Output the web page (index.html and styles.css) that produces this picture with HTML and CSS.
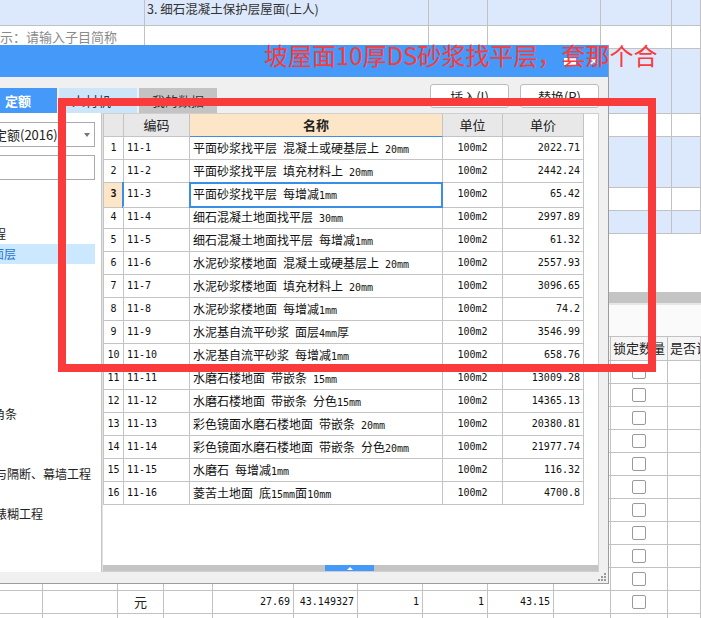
FILE: index.html
```html
<!DOCTYPE html>
<html lang="zh-CN">
<head>
<meta charset="utf-8">
<title>定额查询</title>
<link rel="stylesheet" href="styles.css">
</head>
<body>
<div class="app">
  <div class="trow r1 blue"><div></div><div class="t1">3. 细石混凝土保护层屋面(上人)</div><div></div><div></div><div></div><div></div></div>
  <div class="trow r23"><div class="t2">提示：请输入子目简称</div><div></div><div></div><div></div><div></div><div></div></div>
  <div class="trow r3 blue"><div></div><div></div><div></div><div></div><div></div><div></div></div>
  <div class="trow r23"><div></div><div></div><div></div><div></div><div></div><div></div></div>
  <div class="trow r5 blue"><div></div><div></div><div></div><div></div><div></div><div></div></div>
  <div class="trow r23"><div></div><div></div><div></div><div></div><div></div><div></div></div>
  <div class="trow r23 blue"><div></div><div></div><div></div><div></div><div></div><div></div></div>
  <div class="blank"></div>
  <div class="splitter"></div>
  <div class="lower-tools"></div>
  <div class="brow bhead"><div></div><div></div><div></div><div></div><div></div><div></div><div></div><div></div><div></div><div></div><div class="h">锁定数量</div><div class="h">是否计量</div></div>
  <div class="brow"><div></div><div></div><div></div><div></div><div></div><div></div><div></div><div></div><div></div><div></div><div class="ckc"><span class="ck"></span></div><div></div></div>
  <div class="brow"><div></div><div></div><div></div><div></div><div></div><div></div><div></div><div></div><div></div><div></div><div class="ckc"><span class="ck"></span></div><div></div></div>
  <div class="brow"><div></div><div></div><div></div><div></div><div></div><div></div><div></div><div></div><div></div><div></div><div class="ckc"><span class="ck"></span></div><div></div></div>
  <div class="brow"><div></div><div></div><div></div><div></div><div></div><div></div><div></div><div></div><div></div><div></div><div class="ckc"><span class="ck"></span></div><div></div></div>
  <div class="brow"><div></div><div></div><div></div><div></div><div></div><div></div><div></div><div></div><div></div><div></div><div class="ckc"><span class="ck"></span></div><div></div></div>
  <div class="brow"><div></div><div></div><div></div><div></div><div></div><div></div><div></div><div></div><div></div><div></div><div class="ckc"><span class="ck"></span></div><div></div></div>
  <div class="brow"><div></div><div></div><div></div><div></div><div></div><div></div><div></div><div></div><div></div><div></div><div class="ckc"><span class="ck"></span></div><div></div></div>
  <div class="brow"><div></div><div></div><div></div><div></div><div></div><div></div><div></div><div></div><div></div><div></div><div class="ckc"><span class="ck"></span></div><div></div></div>
  <div class="brow"><div></div><div></div><div></div><div></div><div></div><div></div><div></div><div></div><div></div><div></div><div class="ckc"><span class="ck"></span></div><div></div></div>
  <div class="brow"><div></div><div></div><div></div><div></div><div></div><div></div><div></div><div></div><div></div><div></div><div class="ckc"><span class="ck"></span></div><div></div></div>
  <div class="brow"><div></div><div></div><div class="yuan">元</div><div></div><div class="num">27.69</div><div class="num">43.149327</div><div class="num">1</div><div class="num">1</div><div class="num">43.15</div><div></div><div class="ckc"><span class="ck"></span></div><div></div></div>
  <div class="brow"><div></div><div></div><div></div><div></div><div></div><div></div><div></div><div></div><div></div><div></div><div class="ckc"><span class="ck"></span></div><div></div></div>
</div>

<div class="dlg">
  <div class="dlg-title">
    <span class="tb-max"></span>
    <svg class="tb-close" width="8" height="8" viewBox="0 0 8 8"><path d="M1 1L7 7M7 1L1 7" stroke="#fff" stroke-width="1.6"/></svg>
  </div>
  <div class="dlg-body">
    <div class="dlg-tools">
      <div class="tabs">
        <div class="tab on">定额</div>
        <div class="tab t2">人材机</div>
        <div class="tab t3">我的数据</div>
      </div>
      <div class="btns">
        <div class="btn">插入(I)</div>
        <div class="btn">替换(R)</div>
      </div>
    </div>
    <div class="dlg-main">
      <div class="left">
        <div class="sel"><span class="sel-t">定额(2016)</span><span class="arrow"></span></div>
        <div class="search"></div>
        <div class="tree">
          <div class="ti"></div>
          <div class="ti"></div>
          <div class="ti p9">程</div>
          <div class="ti p7 on">面层</div>
          <div class="ti"></div>
          <div class="ti"></div>
          <div class="ti"></div>
          <div class="ti"></div>
          <div class="ti"></div>
          <div class="ti"></div>
          <div class="ti"></div>
          <div class="ti p8">角条</div>
          <div class="ti"></div>
          <div class="ti"></div>
          <div class="ti p10">与隔断、幕墙工程</div>
          <div class="ti"></div>
          <div class="ti p10">裱糊工程</div>
        </div>
      </div>
      <div class="tpanel">
        <div class="grid">
          <div class="gr ghead"><div></div><div>编码</div><div class="hsel">名称</div><div>单位</div><div>单价</div></div>
          <div class="gr"><div class="n">1</div><div class="c">11-1</div><div class="nm">平面砂浆找平层&ensp;混凝土或硬基层上&ensp;<span class="m">20mm</span></div><div class="u">100m2</div><div class="p">2022.71</div></div>
          <div class="gr"><div class="n">2</div><div class="c">11-2</div><div class="nm">平面砂浆找平层&ensp;填充材料上&ensp;<span class="m">20mm</span></div><div class="u">100m2</div><div class="p">2442.24</div></div>
          <div class="gr cur"><div class="n">3</div><div class="c">11-3</div><div class="nm act">平面砂浆找平层&ensp;每增减<span class="m">1mm</span></div><div class="u">100m2</div><div class="p">65.42</div></div>
          <div class="gr"><div class="n">4</div><div class="c">11-4</div><div class="nm">细石混凝土地面找平层&ensp;<span class="m">30mm</span></div><div class="u">100m2</div><div class="p">2997.89</div></div>
          <div class="gr"><div class="n">5</div><div class="c">11-5</div><div class="nm">细石混凝土地面找平层&ensp;每增减<span class="m">1mm</span></div><div class="u">100m2</div><div class="p">61.32</div></div>
          <div class="gr"><div class="n">6</div><div class="c">11-6</div><div class="nm">水泥砂浆楼地面&ensp;混凝土或硬基层上&ensp;<span class="m">20mm</span></div><div class="u">100m2</div><div class="p">2557.93</div></div>
          <div class="gr"><div class="n">7</div><div class="c">11-7</div><div class="nm">水泥砂浆楼地面&ensp;填充材料上&ensp;<span class="m">20mm</span></div><div class="u">100m2</div><div class="p">3096.65</div></div>
          <div class="gr"><div class="n">8</div><div class="c">11-8</div><div class="nm">水泥砂浆楼地面&ensp;每增减<span class="m">1mm</span></div><div class="u">100m2</div><div class="p">74.2</div></div>
          <div class="gr"><div class="n">9</div><div class="c">11-9</div><div class="nm">水泥基自流平砂浆&ensp;面层<span class="m">4mm</span>厚</div><div class="u">100m2</div><div class="p">3546.99</div></div>
          <div class="gr"><div class="n">10</div><div class="c">11-10</div><div class="nm">水泥基自流平砂浆&ensp;每增减<span class="m">1mm</span></div><div class="u">100m2</div><div class="p">658.76</div></div>
          <div class="gr"><div class="n">11</div><div class="c">11-11</div><div class="nm">水磨石楼地面&ensp;带嵌条&ensp;<span class="m">15mm</span></div><div class="u">100m2</div><div class="p">13009.28</div></div>
          <div class="gr"><div class="n">12</div><div class="c">11-12</div><div class="nm">水磨石楼地面&ensp;带嵌条&ensp;分色<span class="m">15mm</span></div><div class="u">100m2</div><div class="p">14365.13</div></div>
          <div class="gr"><div class="n">13</div><div class="c">11-13</div><div class="nm">彩色镜面水磨石楼地面&ensp;带嵌条&ensp;<span class="m">20mm</span></div><div class="u">100m2</div><div class="p">20380.81</div></div>
          <div class="gr"><div class="n">14</div><div class="c">11-14</div><div class="nm">彩色镜面水磨石楼地面&ensp;带嵌条&ensp;分色<span class="m">20mm</span></div><div class="u">100m2</div><div class="p">21977.74</div></div>
          <div class="gr"><div class="n">15</div><div class="c">11-15</div><div class="nm">水磨石&ensp;每增减<span class="m">1mm</span></div><div class="u">100m2</div><div class="p">116.32</div></div>
          <div class="gr"><div class="n">16</div><div class="c">11-16</div><div class="nm">菱苦土地面&ensp;底<span class="m">15mm</span>面<span class="m">10mm</span></div><div class="u">100m2</div><div class="p">4700.8</div></div>
        </div>
        <div class="hscroll"><div class="thumb"><span class="tri"></span></div></div>
      </div>
    </div>
  </div>
  <div class="dlg-foot">
    <svg width="8" height="8" viewBox="0 0 8 8"><g fill="#9a9a9a"><rect x="6" y="0" width="2" height="2"/><rect x="3" y="3" width="2" height="2"/><rect x="6" y="3" width="2" height="2"/><rect x="0" y="6" width="2" height="2"/><rect x="3" y="6" width="2" height="2"/><rect x="6" y="6" width="2" height="2"/></g></svg>
  </div>
</div>

<div class="note-box"></div>
<div class="note-text">坡屋面10厚DS砂浆找平层，套那个合</div>
</body>
</html>
```

FILE: styles.css
```css
* { box-sizing: border-box; }
html, body { margin: 0; padding: 0; }
body {
  width: 701px;
  height: 618px;
  overflow: hidden;
  position: relative;
  background: #fff;
  font-family: "Noto Sans CJK SC", "Noto Sans", sans-serif;
  font-size: 12px;
  color: #222;
}
.m { font-family: "DejaVu Sans Mono", monospace; font-size: 10px; }

/* background application */
.app { width: 701px; }
.trow {
  display: grid;
  grid-template-columns: 145px 284px 59px 113px 71px 1fr;
  border-bottom: 1px solid #c2c2c2;
}
.trow > div { border-right: 1px solid #c2c2c2; overflow: hidden; white-space: nowrap; }
.blue { background: #dce8fb; }
.r1 { height: 26px; }
.r23 { height: 23px; }
.r3 { height: 65px; }
.r5 { height: 51px; }
.t1 { font-size: 12.5px; line-height: 17px; padding-left: 2px; color: #333; }
.t2 { font-size: 13px; line-height: 22px; color: #8a8a8a; text-indent: -13px; }
.blank { height: 58px; }
.splitter { height: 13px; background: #c4c4c4; border-bottom: 2px solid #e6e6e6; }
.lower-tools { height: 32px; background: #fafafa; border-bottom: 1px solid #c2c2c2; }
.brow {
  display: grid;
  grid-template-columns: 43px 75px 46px 49px 81px 64px 65px 65px 66px 57px 57px 1fr;
  height: 23px;
  border-bottom: 1px solid #c2c2c2;
}
.brow > div { border-right: 1px solid #c2c2c2; white-space: nowrap; overflow: hidden; }
.bhead { height: 24px; background: #f5f5f5; }
.bhead .h { font-size: 13px; line-height: 22px; padding-left: 2px; color: #222; }
.ckc { display: flex; align-items: center; justify-content: center; }
.ck { width: 14px; height: 14px; border: 1px solid #9a9a9a; border-radius: 2px; background: #fff; }
.yuan { font-size: 13px; line-height: 22px; text-align: center; }
.num { font-family: "DejaVu Sans Mono", monospace; font-size: 10px; line-height: 22px; text-align: right; padding-right: 3px; color: #111; }

/* dialog */
.dlg {
  position: absolute;
  left: -29px;
  top: 45px;
  width: 638px;
  height: 539px;
  background: #f0f0f0;
  border-right: 1px solid #9c9c9c;
  border-bottom: 1px solid #9c9c9c;
  display: flex;
  flex-direction: column;
  z-index: 5;
}
.dlg-title {
  flex: none;
  height: 32px;
  background: #4499f9;
  display: flex;
  justify-content: flex-end;
  align-items: center;
  gap: 14px;
  padding-right: 10px;
}
.tb-max { width: 12px; height: 7px; border: 2px solid #fff; background: #fff; }
.tb-close { display: block; }
.dlg-body { flex: none; padding: 7px 9px 0 8px; }
.dlg-tools { height: 29px; display: flex; }
.tabs { display: flex; gap: 2px; align-self: flex-end; }
.tab {
  width: 78px;
  height: 25px;
  display: flex;
  align-items: center;
  justify-content: center;
  font-size: 13px;
  color: #333;
}
.tab.on { background: #4499f9; color: #fff; font-weight: bold; }
.tab.t2 { background: #cce5f9; }
.tab.t3 { background: #c3c3c3; }
.btns { margin-left: auto; display: flex; gap: 11px; align-self: flex-start; }
.btn {
  width: 79px;
  height: 24px;
  background: #fff;
  border: 1px solid #bcbcbc;
  border-radius: 3px;
  display: flex;
  align-items: center;
  justify-content: center;
  font-size: 13px;
  color: #222;
}
.dlg-main { height: 459px; display: flex; }
.left {
  width: 123px;
  flex: none;
  background: #fff;
  border-right: 1px solid #c4c4c4;
  padding: 9px 6px 0 6px;
  overflow: hidden;
}
.sel {
  height: 25px;
  border: 1px solid #ababab;
  background: #fff;
  display: flex;
  align-items: center;
  padding-left: 8px;
}
.sel-t { font-size: 13px; color: #222; white-space: nowrap; }
.arrow {
  margin-left: auto;
  margin-right: 4px;
  width: 0;
  height: 0;
  border-left: 3.5px solid transparent;
  border-right: 3.5px solid transparent;
  border-top: 4px solid #777;
}
.search { height: 25px; margin-top: 8px; border: 1px solid #ababab; background: #fff; }
.tree { margin-top: 4px; }
.ti { height: 20px; line-height: 20px; font-size: 12px; white-space: nowrap; color: #222; }
.ti.on { background: #cce8ff; color: #1f74d4; }
.p7 { padding-left: 7px; }
.p8 { padding-left: 8px; }
.p9 { padding-left: 9px; }
.p10 { padding-left: 10px; }

.tpanel {
  width: 497px;
  flex: none;
  background: #fff;
  border: 1px solid #cfcfcf;
  border-left-color: #e2e2e2;
  display: flex;
  flex-direction: column;
}
.grid { width: 481px; border-left: 1px solid #c4c4c4; }
.gr {
  display: grid;
  grid-template-columns: 20px 66px 253px 60px 81px;
  height: 23px;
}
.gr > div {
  border-right: 1px solid #c4c4c4;
  border-bottom: 1px solid #c4c4c4;
  line-height: 22px;
  white-space: nowrap;
  overflow: hidden;
  position: relative;
}
.ghead > div { background: #e8e8e8; font-size: 13px; text-align: center; color: #222; }
.ghead .hsel { background: #fde6c8; font-weight: bold; border-bottom-color: #3a8ee6; }
.n { font-family: "DejaVu Sans Mono", monospace; font-size: 10px; text-align: center; color: #111; }
.c { font-family: "DejaVu Sans Mono", monospace; font-size: 10px; padding-left: 3px; color: #111; }
.nm { padding-left: 3px; font-size: 12px; color: #111; }
.u { font-family: "DejaVu Sans Mono", monospace; font-size: 10px; text-align: center; color: #111; }
.p { font-family: "DejaVu Sans Mono", monospace; font-size: 10px; text-align: right; padding-right: 3px; color: #111; }
.gr > div.c, .gr > div.n { overflow: visible; }
.cur .n { background: #fde6c8; font-weight: bold; }
.cur .c::before {
  content: "";
  position: absolute;
  left: -2px;
  top: -1px;
  bottom: -1px;
  width: 2px;
  background: #3a8ee6;
}
.gr > div.act { overflow: visible; z-index: 1; }
.act::after {
  content: "";
  position: absolute;
  left: -1px;
  right: -1px;
  top: -1px;
  bottom: -1px;
  border: 2px solid #3a8ee6;
}
.hscroll {
  margin-top: auto;
  height: 6px;
  background: #c4c4c4;
  padding-left: 222px;
}
.thumb {
  width: 49px;
  height: 6px;
  background: #4499f9;
  display: flex;
  align-items: center;
  justify-content: center;
}
.tri {
  width: 0;
  height: 0;
  border-left: 3px solid transparent;
  border-right: 3px solid transparent;
  border-bottom: 3px solid #fff;
}
.dlg-foot {
  flex: none;
  height: 11px;
  display: flex;
  justify-content: flex-end;
  align-items: flex-end;
  padding: 0 2px 2px 0;
}

/* red annotation */
.note-box {
  position: absolute;
  left: 58px;
  top: 98px;
  width: 598px;
  height: 274px;
  border: 8px solid #fa3b3b;
  z-index: 10;
}
.note-text {
  position: absolute;
  left: 264px;
  top: 43px;
  font-size: 24px;
  line-height: 24px;
  color: #fa3b3b;
  white-space: nowrap;
  z-index: 11;
}
```
